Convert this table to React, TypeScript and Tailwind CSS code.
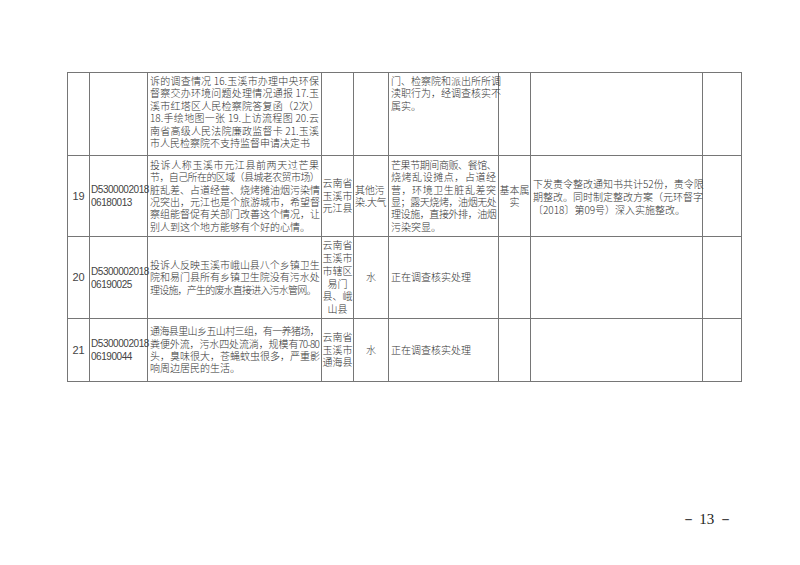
import React from 'react';

type Line = { t: string; tight?: boolean };

type Row = {
  no: string;
  id: string[];
  content: Line[];
  loc: string[];
  kind: string[];
  kindLeft?: boolean;
  result: Line[];
  verdict: string[];
  handling: Line[];
  h: string;
  top?: boolean;
};

const L = (t: string, tight = false): Line => ({ t, tight });

const rows: Row[] = [
  {
    no: '',
    id: [],
    content: [
      L('诉的调查情况 16.玉溪市办理中央环保'),
      L('督察交办环境问题处理情况通报 17.玉'),
      L('溪市红塔区人民检察院答复函（2次）'),
      L('18.手绘地图一张 19.上访流程图 20.云'),
      L('南省高级人民法院廉政监督卡 21.玉溪'),
      L('市人民检察院不支持监督申请决定书'),
    ],
    loc: [],
    kind: [],
    result: [L('门、检察院和派出所所调'), L('渎职行为，经调查核实不'), L('属实。')],
    verdict: [],
    handling: [],
    h: 'h-[83px]',
    top: true,
  },
  {
    no: '19',
    id: ['D5300002018', '06180013'],
    content: [
      L('投诉人称玉溪市元江县前两天过芒果'),
      L('节，自己所在的区域（县城老农贸市场）', true),
      L('脏乱差、占道经营、烧烤摊油烟污染情'),
      L('况突出，元江也是个旅游城市，希望督'),
      L('察组能督促有关部门改善这个情况，让'),
      L('别人到这个地方能够有个好的心情。'),
    ],
    loc: ['云南省', '玉溪市', '元江县'],
    kind: ['其他污', '染.大气'],
    kindLeft: true,
    result: [
      L('芒果节期间商贩、餐馆、', true),
      L('烧烤乱设摊点，占道经'),
      L('营，环境卫生脏乱差突'),
      L('显；露天烧烤，油烟无处', true),
      L('理设施，直接外排，油烟', true),
      L('污染突显。'),
    ],
    verdict: ['基本属', '实'],
    handling: [
      L('下发责令整改通知书共计52份，责令限'),
      L('期整改。同时制定整改方案（元环督字'),
      L('〔2018〕第09号）深入实施整改。'),
    ],
    h: 'h-[81px]',
  },
  {
    no: '20',
    id: ['D5300002018', '06190025'],
    content: [
      L('投诉人反映玉溪市峨山县八个乡镇卫生', true),
      L('院和易门县所有乡镇卫生院没有污水处', true),
      L('理设施，产生的废水直接进入污水管网。', true),
    ],
    loc: ['云南省', '玉溪市', '市辖区', '易门', '县、峨', '山县'],
    kind: ['水'],
    result: [L('正在调查核实处理')],
    verdict: [],
    handling: [],
    h: 'h-[82px]',
  },
  {
    no: '21',
    id: ['D5300002018', '06190044'],
    content: [
      L('通海县里山乡五山村三组，有一养猪场，', true),
      L('粪便外流，污水四处流淌，规模有70-80', true),
      L('头，臭味很大，苍蝇蚊虫很多，严重影'),
      L('响周边居民的生活。'),
    ],
    loc: ['云南省', '玉溪市', '通海县'],
    kind: ['水'],
    result: [L('正在调查核实处理')],
    verdict: [],
    handling: [],
    h: 'h-[63px]',
  },
];

function Lines({ lines, justify = true }: { lines: Line[]; justify?: boolean }) {
  return (
    <div>
      {lines.map((l, i) => {
        const last = i === lines.length - 1;
        return (
          <div
            key={i}
            className={
              (justify && !last && lines.length > 1 ? 'text-justify [text-align-last:justify] ' : 'text-left ') +
              (l.tight ? 'tracking-[-0.8px] ' : '') +
              'whitespace-nowrap'
            }
          >
            {l.t}
          </div>
        );
      })}
    </div>
  );
}

const cell = 'border border-[#767676] p-0';

export default function App() {
  return (
    <div
      className="w-[800px] h-[565px] bg-white text-[#333] font-light flex flex-col"
      style={{ fontFamily: '"Noto Sans CJK SC", sans-serif' }}
    >
      <div className="pl-[67px] pt-[72px]">
        <table className="table-fixed border-collapse w-[674px] text-[10px] leading-[12.4px]">
          <colgroup>
            <col className="w-[22px]" />
            <col className="w-[58px]" />
            <col className="w-[174px]" />
            <col className="w-[32px]" />
            <col className="w-[35px]" />
            <col className="w-[110px]" />
            <col className="w-[32px]" />
            <col className="w-[172px]" />
            <col className="w-[39px]" />
          </colgroup>
          <tbody>
            {rows.map((r, i) => {
              const va = r.top ? 'align-top pt-[2px]' : 'align-middle';
              return (
                <tr key={i} className={r.h}>
                  <td className={`${cell} ${va} text-center text-[11px] font-normal font-['Liberation_Sans',sans-serif] text-[#444]`}>
                    {r.no}
                  </td>
                  <td className={`${cell} ${va} font-normal font-['Liberation_Sans',sans-serif] text-[10px] leading-[13px] tracking-[-0.45px] text-[#444]`}>
                    {r.id.map((s, k) => (
                      <div key={k} className="pl-[1px] whitespace-nowrap">
                        {s}
                      </div>
                    ))}
                  </td>
                  <td className={`${cell} ${va} px-[2px]`}>
                    <Lines lines={r.content} />
                  </td>
                  <td className={`${cell} ${va} text-center leading-[12.8px]`}>
                    {r.loc.map((s, k) => (
                      <div key={k} className="whitespace-nowrap">
                        {s}
                      </div>
                    ))}
                  </td>
                  <td className={`${cell} ${va} ${r.kindLeft ? 'text-left pl-[1px] tracking-[-0.3px]' : 'text-center'}`}>
                    {r.kind.map((s, k) => (
                      <div key={k} className="whitespace-nowrap">
                        {s}
                      </div>
                    ))}
                  </td>
                  <td className={`${cell} ${va} px-[2px]`}>
                    <Lines lines={r.result} />
                  </td>
                  <td className={`${cell} ${va} text-center`}>
                    {r.verdict.map((s, k) => (
                      <div key={k} className="whitespace-nowrap">
                        {s}
                      </div>
                    ))}
                  </td>
                  <td className={`${cell} ${va} px-[2px] leading-[13px]`}>
                    <Lines lines={r.handling} />
                  </td>
                  <td className={`${cell} ${va}`}></td>
                </tr>
              );
            })}
          </tbody>
        </table>
      </div>
      <div className="flex justify-end pr-[67px] mt-[126px]">
        <span className="font-['Liberation_Serif',serif] font-normal text-[15px] text-[#222]">－ 13 －</span>
      </div>
    </div>
  );
}
